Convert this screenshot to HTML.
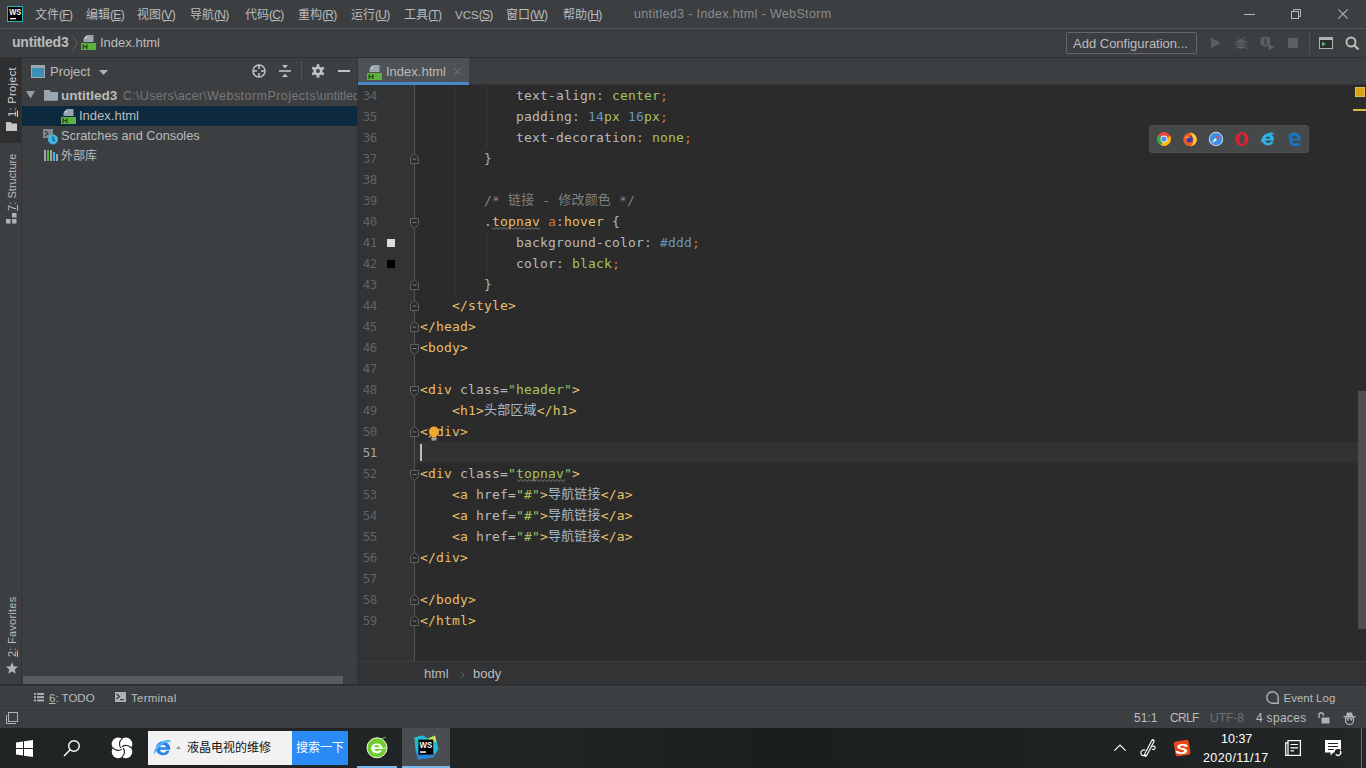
<!DOCTYPE html>
<html lang="zh">
<head>
<meta charset="utf-8">
<title>untitled3 - Index.html - WebStorm</title>
<style>
*{box-sizing:border-box;margin:0;padding:0}
html,body{width:1366px;height:768px;overflow:hidden;background:#3c3f41}
body{position:relative;font-family:"Liberation Sans","Noto Sans CJK SC",sans-serif;font-size:12px;color:#bbbbbb}
.abs{position:absolute}
.t{position:absolute;white-space:nowrap;line-height:16px}
svg{position:absolute;display:block;overflow:visible}
#titlebar{left:0;top:0;width:1366px;height:28px;background:#3c3f41}
#navbar{left:0;top:28px;width:1366px;height:30px;background:#3c3f41;border-top:1px solid #515456;border-bottom:1px solid #2f3133}
.menu{font-size:12px;color:#bbbbbb;top:7px;line-height:16px}
.menu i{font-style:normal;font-size:12px;letter-spacing:-0.7px}
.menu u{text-decoration:underline;text-underline-offset:1px}
#lstripe{left:0;top:58px;width:22px;height:626px;background:#3c3f41;border-right:1px solid #323537}
.vt{position:absolute;white-space:nowrap;transform-origin:0 0;transform:rotate(-90deg);font-size:11px;line-height:14px;color:#bbbbbb}
.vt u{text-underline-offset:1px}
#proj{left:22px;top:58px;width:336px;height:626px;background:#3c3f41;border-right:1px solid #323435;border-left:1px solid #3c3f41}
.row{position:absolute;left:-1px;width:335px;height:20px}
#tabs{left:358px;top:58px;width:1008px;height:27px;background:#3c3f41;border-bottom:1px solid #323232}
#editor{left:358px;top:85px;width:1008px;height:576px;background:#2b2b2b;overflow:hidden}
#gutter{left:0;top:0;width:56px;height:576px;background:#313335}
#gline{left:56px;top:0;width:1px;height:576px;background:#555555}
.ln{position:absolute;left:0;width:19px;text-align:right;font-family:"DejaVu Sans Mono","Liberation Mono",monospace;font-size:12.5px;letter-spacing:-0.4px;line-height:21px;height:21px;color:#606366}
.cl{position:absolute;left:62px;white-space:pre;font-family:"DejaVu Sans Mono","Noto Sans CJK SC",monospace;font-size:13px;letter-spacing:0.17px;line-height:21px;height:21px;color:#a9b7c6}
.cj{font-size:13px;position:relative;top:-1px}
.tg{color:#e8bf6a}.at{color:#bababa}.st{color:#a5c261}.kw{color:#cc7832}.nu{color:#6897bb}.cm{color:#808080}.pr{color:#bababa}
.wv{text-decoration:none}
#crumbs{left:358px;top:661px;width:1008px;height:23px;background:#313335;border-top:1px solid #3a3c3e}
#bstripe{left:0;top:684px;width:1366px;height:23px;background:#3c3f41;border-top:2px solid #2e3032;box-shadow:inset 0 1px 0 #424547}
#status{left:0;top:705px;width:1366px;height:23px;background:#3c3f41;border-top:2px solid #393c3e;box-shadow:inset 0 1px 0 #414446}
#taskbar{left:0;top:728px;width:1366px;height:40px;background:#202425 linear-gradient(90deg,#202425 0%,#212526 38%,#1b1e1f 57%,#1d2021 70%,#222625 100%)}
</style>
</head>
<body>
<!-- TITLE BAR -->
<div id="titlebar" class="abs">
  <svg style="left:7px;top:6px" width="16" height="16" viewBox="0 0 16 16"><rect x="0" y="0" width="16" height="16" fill="#1fb7b7"/><rect x="1" y="1" width="14" height="14" fill="#000"/><rect x="3" y="12" width="6" height="1.3" fill="#fff"/>
  <text x="2.2" y="9" font-family="Liberation Sans, sans-serif" font-weight="bold" font-size="9" fill="#fff" textLength="12" lengthAdjust="spacingAndGlyphs">WS</text></svg>
  <div class="t menu" style="left:35px">文件<i>(<u>F</u>)</i></div>
  <div class="t menu" style="left:86px">编辑<i>(<u>E</u>)</i></div>
  <div class="t menu" style="left:137px">视图<i>(<u>V</u>)</i></div>
  <div class="t menu" style="left:190px">导航<i>(<u>N</u>)</i></div>
  <div class="t menu" style="left:245px">代码<i>(<u>C</u>)</i></div>
  <div class="t menu" style="left:298px">重构<i>(<u>R</u>)</i></div>
  <div class="t menu" style="left:351px">运行<i>(<u>U</u>)</i></div>
  <div class="t menu" style="left:404px">工具<i>(<u>T</u>)</i></div>
  <div class="t menu" style="left:455px"><span style="font-size:11.5px">VCS</span><i>(<u>S</u>)</i></div>
  <div class="t menu" style="left:506px">窗口<i>(<u>W</u>)</i></div>
  <div class="t menu" style="left:563px">帮助<i>(<u>H</u>)</i></div>
  <div class="t" style="left:634px;top:6px;font-size:12.5px;letter-spacing:0.35px;color:#8b8d8f">untitled3 - Index.html - WebStorm</div>
  <div class="abs" style="left:1244px;top:14px;width:11px;height:1px;background:#b4b6b8"></div>
  <svg style="left:1291px;top:9px" width="10" height="10" viewBox="0 0 10 10" fill="none" stroke="#b4b6b8" stroke-width="1"><rect x="0.5" y="2.5" width="7" height="7"/><path d="M2.5 2.5V0.5H9.5V7.5H7.5"/></svg>
  <svg style="left:1338px;top:9px" width="10" height="10" viewBox="0 0 10 10" stroke="#b4b6b8" stroke-width="1.1"><path d="M0.3 0.3L9.7 9.7M9.7 0.3L0.3 9.7"/></svg>
</div>
<!-- NAV BAR -->
<div id="navbar" class="abs">
  <div class="t" style="left:12px;top:5px;font-size:14px;letter-spacing:-0.2px;font-weight:bold;color:#bbbbbb">untitled3</div>
  <svg style="left:72px;top:6px" width="6" height="16" viewBox="0 0 6 16" fill="none" stroke="#5a5d5f" stroke-width="1"><path d="M0.5 0.5L5 8L0.5 15.5"/></svg>
  <svg class="hicon" style="left:81px;top:6px" width="16" height="16" viewBox="0 0 16 16"><path d="M6.5 0H12.5V7H2.5V4Z" fill="#9aa7b0"/><path d="M6 0V3.5H2.5Z" fill="#c3cbd1"/><rect x="0" y="8" width="15" height="7" fill="#5fb041"/><path d="M2.2 9.3V14M2.2 11.6H5.8M5.8 9.3V14" stroke="#1e4d12" stroke-width="1.4" fill="none"/></svg>
  <div class="t" style="left:100px;top:6px;font-size:13px;color:#bbbbbb">Index.html</div>
  <div class="abs" style="left:1066px;top:3px;width:131px;height:22px;border:1px solid #646668;border-radius:2px"></div>
  <div class="t" style="left:1073px;top:7px;font-size:13px;color:#bbbbbb">Add Configuration...</div>
  <svg style="left:1210px;top:8px" width="11" height="12" viewBox="0 0 11 12"><path d="M1 0.5L10.5 6L1 11.5Z" fill="#5c5f61"/></svg>
  <svg style="left:1234px;top:7px" width="14" height="14" viewBox="0 0 14 14"><ellipse cx="7" cy="8" rx="4" ry="5" fill="#5c5f61"/><path d="M4.5 3L3 1M9.5 3L11 1M0.5 6H3.5M10.5 6H13.5M0.5 9H3.5M10.5 9H13.5M1 12.5L3.5 11M13 12.5L10.5 11" stroke="#5c5f61" stroke-width="1.2" fill="none"/><path d="M3 7H11M3 9.5H11" stroke="#3c3f41" stroke-width="0.8"/></svg>
  <svg style="left:1260px;top:7px" width="15" height="15" viewBox="0 0 15 15"><path d="M0.5 1.5L6 0.5L10 1.5V8L6 11L0.5 9Z" fill="#5c5f61"/><rect x="4.5" y="2.5" width="2" height="6.5" fill="#3c3f41"/><path d="M8.5 7.5L14.5 11L8.5 14.5Z" fill="#5c5f61"/></svg>
  <div class="abs" style="left:1288px;top:9px;width:10px;height:10px;background:#5c5f61"></div>
  <div class="abs" style="left:1309px;top:3px;width:1px;height:22px;background:#515355"></div>
  <svg style="left:1319px;top:8px" width="14" height="12" viewBox="0 0 14 12"><rect x="0" y="0" width="14" height="12" fill="#afb1b3"/><rect x="1" y="3" width="12" height="8" fill="#2b2f2b"/><path d="M3 4.5L7 7L3 9.5Z" fill="#59a869"/></svg>
  <svg style="left:1345px;top:7px" width="15" height="15" viewBox="0 0 15 15" fill="none" stroke="#bbbbbb"><circle cx="6" cy="6" r="4.5" stroke-width="2"/><path d="M9.5 9.5L13.5 13.5" stroke-width="2.4"/></svg>
</div>
<!-- LEFT STRIPE -->
<div id="lstripe" class="abs">
  <div class="abs" style="left:0;top:0;width:21px;height:85px;background:#2d2f30"></div>
  <div class="vt" style="left:5px;top:59px;letter-spacing:0.35px;color:#d4d4d4"><u>1</u>: Project</div>
  <svg style="left:6px;top:64px" width="11" height="9" viewBox="0 0 11 9"><path d="M0 0H4.5L6 1.5H11V9H0Z" fill="#c4c6c8"/></svg>
  <div class="vt" style="left:5px;top:153px;letter-spacing:0.05px"><u>7</u>: Structure</div>
  <svg style="left:6px;top:155px" width="11" height="11" viewBox="0 0 11 11" fill="#afb1b3"><rect x="6" y="0" width="4.5" height="4.5"/><rect x="0" y="6" width="4.5" height="4.5"/><rect x="6" y="6" width="4.5" height="4.5"/></svg>
  <div class="vt" style="left:5px;top:599px;letter-spacing:0.25px"><u>2</u>: Favorites</div>
  <svg style="left:5.5px;top:603.5px" width="12" height="12" viewBox="0 0 13 13"><path d="M6.5 0.3L8.4 4.6L13 5L9.5 8L10.6 12.6L6.5 10.2L2.4 12.6L3.5 8L0 5L4.6 4.6Z" fill="#afb1b3"/></svg>
</div>
<!-- PROJECT PANEL -->
<div id="proj" class="abs">
  <svg style="left:8px;top:7px" width="14" height="13" viewBox="0 0 14 13"><rect x="0" y="0" width="14" height="13" fill="#9aa7b0"/><rect x="1" y="3" width="12" height="9" fill="#3d8fb8"/></svg>
  <div class="t" style="left:27px;top:6px;font-size:13px">Project</div>
  <svg style="left:76px;top:12px" width="9" height="5" viewBox="0 0 9 5"><path d="M0 0H9L4.5 5Z" fill="#afb1b3"/></svg>
  <svg style="left:229px;top:6px" width="14" height="14" viewBox="0 0 14 14" fill="none" stroke="#bfc1c3" stroke-width="1.5"><circle cx="7" cy="7" r="6"/><path d="M7 1V5M7 9V13M1 7H5M9 7H13" stroke-width="1.6"/></svg>
  <svg style="left:256px;top:7px" width="12" height="12" viewBox="0 0 12 12" fill="#bfc1c3"><rect x="0" y="5.2" width="12" height="1.6"/><path d="M3 0H9L6 3.3Z"/><path d="M3 12H9L6 8.7Z"/></svg>
  <div class="abs" style="left:278px;top:3px;width:1px;height:20px;background:#515355"></div>
  <svg style="left:288px;top:6px" width="14" height="14" viewBox="0 0 14 14"><g fill="#bfc1c3"><circle cx="7" cy="7" r="4.6"/><rect x="5.6" y="0.3" width="2.8" height="13.4" rx="0.5"/><rect x="5.6" y="0.3" width="2.8" height="13.4" rx="0.5" transform="rotate(60 7 7)"/><rect x="5.6" y="0.3" width="2.8" height="13.4" rx="0.5" transform="rotate(120 7 7)"/></g><circle cx="7" cy="7" r="1.9" fill="#3c3f41"/></svg>
  <div class="abs" style="left:315px;top:12px;width:12px;height:2px;background:#bfc1c3"></div>
  <!-- tree -->
  <div class="row" style="top:48px;background:#0d293e"></div>
  <svg style="left:3px;top:33px" width="9" height="8" viewBox="0 0 9 8"><path d="M0 0H9L4.5 7.5Z" fill="#9a9da0"/></svg>
  <svg style="left:21px;top:32px" width="14" height="11" viewBox="0 0 14 11"><path d="M0 0H5.5L7 2H14V10.7H0Z" fill="#9aa7b0"/></svg>
  <div class="t" style="left:38px;top:30px;font-size:13.5px;font-weight:bold">untitled3</div>
  <div class="t" style="left:100px;top:30px;font-size:12.5px;color:#787878;width:234px;overflow:hidden"><span style="letter-spacing:0.3px">C:\Users\acer\</span><span style="letter-spacing:0.45px">WebstormProjects</span>\untitled3</div>
  <svg style="left:38px;top:51px" width="16" height="16" viewBox="0 0 16 16"><path d="M6.5 0H12.5V7H2.5V4Z" fill="#9aa7b0"/><path d="M6 0V3.5H2.5Z" fill="#c3cbd1"/><rect x="0" y="8" width="15" height="7" fill="#5fb041"/><path d="M2.2 9.3V14M2.2 11.6H5.8M5.8 9.3V14" stroke="#1e4d12" stroke-width="1.4" fill="none"/></svg>
  <div class="t" style="left:56px;top:50px;font-size:13px">Index.html</div>
  <svg style="left:20px;top:71px" width="16" height="16" viewBox="0 0 16 16"><rect x="0" y="0" width="10" height="9" fill="#7f8b91"/><path d="M2 2L5 4.5L2 7" stroke="#3c3f41" stroke-width="1.2" fill="none"/><circle cx="10" cy="10.5" r="5" fill="#40b6e0"/><path d="M10 7.5V10.8L12 12" stroke="#1d4a5e" stroke-width="1.2" fill="none"/></svg>
  <div class="t" style="left:38px;top:70px;font-size:12.8px">Scratches and Consoles</div>
  <svg style="left:21px;top:92px" width="14" height="11" viewBox="0 0 14 11"><rect x="0" y="0" width="2" height="11" fill="#9aa7b0"/><rect x="3" y="0" width="2" height="11" fill="#62b543"/><rect x="6" y="0" width="2" height="11" fill="#9aa7b0"/><rect x="9" y="2" width="2" height="9" fill="#40b6e0"/><rect x="12" y="4" width="2" height="7" fill="#9aa7b0"/></svg>
  <div class="t" style="left:38px;top:90px;font-size:12px">外部库</div>
  <div class="abs" style="left:0;top:618px;width:320px;height:8px;background:#595b5d"></div>
</div>
<!-- TABS -->
<div id="tabs" class="abs">
  <div class="abs" style="left:0;top:0;width:111px;height:27px;background:#4e5254;border-bottom:3px solid #4a88c7"></div>
  <svg style="left:8.5px;top:7px" width="16" height="16" viewBox="0 0 16 16"><path d="M6.5 0H12.5V7H2.5V4Z" fill="#9aa7b0"/><path d="M6 0V3.5H2.5Z" fill="#c3cbd1"/><rect x="0" y="8" width="15" height="7" fill="#5fb041"/><path d="M2.2 9.3V14M2.2 11.6H5.8M5.8 9.3V14" stroke="#1e4d12" stroke-width="1.4" fill="none"/></svg>
  <div class="t" style="left:28px;top:6px;font-size:13px">Index.html</div>
  <svg style="left:95.5px;top:10px" width="7" height="7" viewBox="0 0 7 7" stroke="#787a7c" stroke-width="1"><path d="M0.5 0.5L6.5 6.5M6.5 0.5L0.5 6.5"/></svg>
</div>
<!-- EDITOR -->
<div id="editor" class="abs">
  <div class="abs" style="left:57px;top:357px;width:951px;height:21px;background:#323232"></div>
  <div id="gutter" class="abs"></div>
  <div id="gline" class="abs"></div>
  <div class="abs" style="left:96px;top:0;width:1px;height:210px;background:#393939"></div>
  <div class="abs" style="left:128px;top:0;width:1px;height:63px;background:#393939"></div>
  <div class="abs" style="left:128px;top:147px;width:1px;height:42px;background:#393939"></div>
  <div class="abs" style="left:29px;top:154px;width:8px;height:8px;background:#dddddd"></div>
  <div class="abs" style="left:29px;top:175px;width:8px;height:8px;background:#000000"></div>
  <div id="codebox">
<div class="ln" style="top:0px">34</div>
<div class="ln" style="top:21px">35</div>
<div class="ln" style="top:42px">36</div>
<div class="ln" style="top:63px">37</div>
<div class="ln" style="top:84px">38</div>
<div class="ln" style="top:105px">39</div>
<div class="ln" style="top:126px">40</div>
<div class="ln" style="top:147px">41</div>
<div class="ln" style="top:168px">42</div>
<div class="ln" style="top:189px">43</div>
<div class="ln" style="top:210px">44</div>
<div class="ln" style="top:231px">45</div>
<div class="ln" style="top:252px">46</div>
<div class="ln" style="top:273px">47</div>
<div class="ln" style="top:294px">48</div>
<div class="ln" style="top:315px">49</div>
<div class="ln" style="top:336px">50</div>
<div class="ln" style="top:357px;color:#a4a3a3">51</div>
<div class="ln" style="top:378px">52</div>
<div class="ln" style="top:399px">53</div>
<div class="ln" style="top:420px">54</div>
<div class="ln" style="top:441px">55</div>
<div class="ln" style="top:462px">56</div>
<div class="ln" style="top:483px">57</div>
<div class="ln" style="top:504px">58</div>
<div class="ln" style="top:525px">59</div>
<div class="cl" style="top:0px">            <span class="pr">text-align</span>: <span class="st">center</span><span class="kw">;</span></div>
<div class="cl" style="top:21px">            <span class="pr">padding</span>: <span class="nu">14</span><span class="st">px</span> <span class="nu">16</span><span class="st">px</span><span class="kw">;</span></div>
<div class="cl" style="top:42px">            <span class="pr">text-decoration</span>: <span class="st">none</span><span class="kw">;</span></div>
<div class="cl" style="top:63px">        }</div>
<div class="cl" style="top:105px">        <span class="cm">/* <span class="cj">链接</span> - <span class="cj">修改颜色</span> */</span></div>
<div class="cl" style="top:126px">        .<span class="tg wv">topnav</span> <span class="kw">a</span>:<span class="tg">hover</span> {</div>
<div class="cl" style="top:147px">            <span class="pr">background-color</span>: <span class="nu">#ddd</span><span class="kw">;</span></div>
<div class="cl" style="top:168px">            <span class="pr">color</span>: <span class="st">black</span><span class="kw">;</span></div>
<div class="cl" style="top:189px">        }</div>
<div class="cl" style="top:210px">    <span class="tg">&lt;/style&gt;</span></div>
<div class="cl" style="top:231px"><span class="tg">&lt;/head&gt;</span></div>
<div class="cl" style="top:252px"><span class="tg">&lt;body&gt;</span></div>
<div class="cl" style="top:294px"><span class="tg">&lt;div</span> <span class="at">class=</span><span class="st">"header"</span><span class="tg">&gt;</span></div>
<div class="cl" style="top:315px">    <span class="tg">&lt;h1&gt;</span><span class="cj">头部区域</span><span class="tg">&lt;/h1&gt;</span></div>
<div class="cl" style="top:336px"><span class="tg">&lt;/div&gt;</span></div>
<div class="cl" style="top:378px"><span class="tg">&lt;div</span> <span class="at">class=</span><span class="st">"<span class="wv">topnav</span>"</span><span class="tg">&gt;</span></div>
<div class="cl" style="top:399px">    <span class="tg">&lt;a</span> <span class="at">href=</span><span class="st">"#"</span><span class="tg">&gt;</span><span class="cj">导航链接</span><span class="tg">&lt;/a&gt;</span></div>
<div class="cl" style="top:420px">    <span class="tg">&lt;a</span> <span class="at">href=</span><span class="st">"#"</span><span class="tg">&gt;</span><span class="cj">导航链接</span><span class="tg">&lt;/a&gt;</span></div>
<div class="cl" style="top:441px">    <span class="tg">&lt;a</span> <span class="at">href=</span><span class="st">"#"</span><span class="tg">&gt;</span><span class="cj">导航链接</span><span class="tg">&lt;/a&gt;</span></div>
<div class="cl" style="top:462px"><span class="tg">&lt;/div&gt;</span></div>
<div class="cl" style="top:504px"><span class="tg">&lt;/body&gt;</span></div>
<div class="cl" style="top:525px"><span class="tg">&lt;/html&gt;</span></div>
<svg style="left:52px;top:68px" width="9" height="11" viewBox="0 0 9 11"><path d="M0.5 10.5V4L4.5 0.5L8.5 4V10.5Z" fill="#2b2b2b" stroke="#5e6062" stroke-width="1"/><path d="M2.5 6H6.5" stroke="#7a7a7a" stroke-width="1"/></svg>
<svg style="left:52px;top:132.5px" width="9" height="11" viewBox="0 0 9 11"><path d="M0.5 0.5H8.5V6.5L4.5 10.5L0.5 6.5Z" fill="#2b2b2b" stroke="#5e6062" stroke-width="1"/><path d="M2.5 4.5H6.5" stroke="#7a7a7a" stroke-width="1"/></svg>
<svg style="left:52px;top:194px" width="9" height="11" viewBox="0 0 9 11"><path d="M0.5 10.5V4L4.5 0.5L8.5 4V10.5Z" fill="#2b2b2b" stroke="#5e6062" stroke-width="1"/><path d="M2.5 6H6.5" stroke="#7a7a7a" stroke-width="1"/></svg>
<svg style="left:52px;top:215px" width="9" height="11" viewBox="0 0 9 11"><path d="M0.5 10.5V4L4.5 0.5L8.5 4V10.5Z" fill="#2b2b2b" stroke="#5e6062" stroke-width="1"/><path d="M2.5 6H6.5" stroke="#7a7a7a" stroke-width="1"/></svg>
<svg style="left:52px;top:236px" width="9" height="11" viewBox="0 0 9 11"><path d="M0.5 10.5V4L4.5 0.5L8.5 4V10.5Z" fill="#2b2b2b" stroke="#5e6062" stroke-width="1"/><path d="M2.5 6H6.5" stroke="#7a7a7a" stroke-width="1"/></svg>
<svg style="left:52px;top:258.5px" width="9" height="11" viewBox="0 0 9 11"><path d="M0.5 0.5H8.5V6.5L4.5 10.5L0.5 6.5Z" fill="#2b2b2b" stroke="#5e6062" stroke-width="1"/><path d="M2.5 4.5H6.5" stroke="#7a7a7a" stroke-width="1"/></svg>
<svg style="left:52px;top:300.5px" width="9" height="11" viewBox="0 0 9 11"><path d="M0.5 0.5H8.5V6.5L4.5 10.5L0.5 6.5Z" fill="#2b2b2b" stroke="#5e6062" stroke-width="1"/><path d="M2.5 4.5H6.5" stroke="#7a7a7a" stroke-width="1"/></svg>
<svg style="left:52px;top:341px" width="9" height="11" viewBox="0 0 9 11"><path d="M0.5 10.5V4L4.5 0.5L8.5 4V10.5Z" fill="#2b2b2b" stroke="#5e6062" stroke-width="1"/><path d="M2.5 6H6.5" stroke="#7a7a7a" stroke-width="1"/></svg>
<svg style="left:52px;top:384.5px" width="9" height="11" viewBox="0 0 9 11"><path d="M0.5 0.5H8.5V6.5L4.5 10.5L0.5 6.5Z" fill="#2b2b2b" stroke="#5e6062" stroke-width="1"/><path d="M2.5 4.5H6.5" stroke="#7a7a7a" stroke-width="1"/></svg>
<svg style="left:52px;top:467px" width="9" height="11" viewBox="0 0 9 11"><path d="M0.5 10.5V4L4.5 0.5L8.5 4V10.5Z" fill="#2b2b2b" stroke="#5e6062" stroke-width="1"/><path d="M2.5 6H6.5" stroke="#7a7a7a" stroke-width="1"/></svg>
<svg style="left:52px;top:509px" width="9" height="11" viewBox="0 0 9 11"><path d="M0.5 10.5V4L4.5 0.5L8.5 4V10.5Z" fill="#2b2b2b" stroke="#5e6062" stroke-width="1"/><path d="M2.5 6H6.5" stroke="#7a7a7a" stroke-width="1"/></svg>
<svg style="left:52px;top:530px" width="9" height="11" viewBox="0 0 9 11"><path d="M0.5 10.5V4L4.5 0.5L8.5 4V10.5Z" fill="#2b2b2b" stroke="#5e6062" stroke-width="1"/><path d="M2.5 6H6.5" stroke="#7a7a7a" stroke-width="1"/></svg>
  </div>
  <svg style="left:134px;top:142px" width="48" height="3" viewBox="0 0 48 3"><polyline points="0,0.5 2,2.5 4,0.5 6,2.5 8,0.5 10,2.5 12,0.5 14,2.5 16,0.5 18,2.5 20,0.5 22,2.5 24,0.5 26,2.5 28,0.5 30,2.5 32,0.5 34,2.5 36,0.5 38,2.5 40,0.5 42,2.5 44,0.5 46,2.5 48,0.5" fill="none" stroke="#83917f" stroke-width="0.85"/></svg>
  <svg style="left:159px;top:394px" width="48" height="3" viewBox="0 0 48 3"><polyline points="0,0.5 2,2.5 4,0.5 6,2.5 8,0.5 10,2.5 12,0.5 14,2.5 16,0.5 18,2.5 20,0.5 22,2.5 24,0.5 26,2.5 28,0.5 30,2.5 32,0.5 34,2.5 36,0.5 38,2.5 40,0.5 42,2.5 44,0.5 46,2.5 48,0.5" fill="none" stroke="#83917f" stroke-width="0.85"/></svg>
  <div class="abs" style="left:62px;top:359px;width:2px;height:17px;background:#bbbbbb"></div>
  <svg style="left:70px;top:340px" width="12" height="16" viewBox="0 0 12 16"><circle cx="6" cy="6.5" r="5" fill="#f2a82d"/><rect x="3.5" y="10" width="5" height="2.5" fill="#f2a82d"/><rect x="3.5" y="12.8" width="5" height="1" fill="#d8d8d8"/><rect x="3.5" y="14.4" width="5" height="1" fill="#d8d8d8"/></svg>
  <!-- browsers popup -->
  <div class="abs" style="left:791px;top:40px;width:160px;height:28px;background:#45494a;border:1px solid #4c5052;border-radius:3px"></div>
  <svg style="left:798px;top:46px" width="16" height="16" viewBox="0 0 16 16"><circle cx="8" cy="8" r="7" fill="#e8453c"/><path d="M8 8L1.9 4.5A7 7 0 0 0 5 14.3Z" fill="#34a853"/><path d="M8 8L5 14.3A7 7 0 0 0 14.9 8.5L14.5 5Z" fill="#fbbc05"/><path d="M8 8L14.5 4.8L11 5Z" fill="#e8453c"/><circle cx="8" cy="8" r="3.4" fill="#f1f1f1"/><circle cx="8" cy="8" r="2.6" fill="#4b8bf4"/></svg>
  <svg style="left:824px;top:46px" width="16" height="16" viewBox="0 0 16 16"><circle cx="8" cy="8.5" r="6.8" fill="#f0582a"/><path d="M8 1.5C12 2 14.8 5 14.8 8.5C14.8 12 12 15 8.5 15.3C11 13 12 10 11 7C10.5 5 9 3 8 1.5Z" fill="#ffcb2d"/><circle cx="7.6" cy="8.2" r="3.2" fill="#3b3aa8"/><path d="M3 6C5 4 8 5 9 7C7 6.5 5 7 4 9Z" fill="#f58a1f"/></svg>
  <svg style="left:850px;top:46px" width="16" height="16" viewBox="0 0 16 16"><circle cx="8" cy="8" r="7.2" fill="#d7dde4"/><circle cx="8" cy="8" r="6.2" fill="#3b8fe8"/><path d="M12 4L9 9L7 7Z" fill="#f04a3a"/><path d="M4 12L9 9L7 7Z" fill="#ffffff"/></svg>
  <svg style="left:876px;top:46px" width="16" height="16" viewBox="0 0 16 16"><ellipse cx="8" cy="8" rx="6.6" ry="7" fill="#e0202f"/><ellipse cx="8" cy="8" rx="2.7" ry="5" fill="#45494a"/></svg>
  <svg style="left:902px;top:46px" width="16" height="16" viewBox="0 0 16 16"><path d="M2 8.5A6 6 0 0 1 14 8.5V9.5H5.5A2.8 2.8 0 0 0 10.8 10.5H13.6A6 6 0 0 1 2 8.5ZM5.5 7.5H10.6A2.6 2.6 0 0 0 5.5 7.5Z" fill="#2bb5ea"/><path d="M1 12C0 9 4 4 9 2C12 1 14.5 1.5 14 4C13.5 2.5 11 3 8.5 4.5C5 6.5 2 10 1 12Z" fill="#2bb5ea"/></svg>
  <svg style="left:928px;top:46px" width="16" height="16" viewBox="0 0 16 16"><path d="M1.5 8C2 4 5 1.5 8.5 1.5C12 1.5 14.5 4 14.5 7.5V9.5H5.8C6 11.5 8 12.6 10 12.6C11.6 12.6 13 12.2 14 11.6V14C13 14.6 11.4 15 9.6 15C5.5 15 3 12.5 3 9C3 7 4 5.5 5.5 4.8C3.5 5 2 6.5 1.5 8ZM5.9 7.4H11.2C11.2 5.5 10 4.4 8.5 4.4C7 4.4 6 5.6 5.9 7.4Z" fill="#1477c8"/></svg>
  <!-- scrollbar / markers -->
  <div class="abs" style="left:997px;top:2px;width:10px;height:10px;background:#d6a316;border:1px solid #e3bd55"></div>
  <div class="abs" style="left:995px;top:24px;width:13px;height:2px;background:#d9b53a"></div>
  <div class="abs" style="left:1000px;top:306px;width:8px;height:238px;background:#4d4d4d"></div>
</div>
<div id="crumbs" class="abs">
  <div class="t" style="left:66px;top:4px;font-size:13px">html</div>
  <svg style="left:102px;top:9px" width="5" height="8" viewBox="0 0 5 8" fill="none" stroke="#606365" stroke-width="1"><path d="M0.5 0.5L4 4L0.5 7.5"/></svg>
  <div class="t" style="left:115px;top:4px;font-size:13px">body</div>
</div>
<!-- BOTTOM STRIPE -->
<div id="bstripe" class="abs">
  <svg style="left:34px;top:7px" width="10" height="9" viewBox="0 0 10 9" fill="#afb1b3"><rect x="0" y="0" width="2" height="1.9"/><rect x="3" y="0" width="7" height="1.9"/><rect x="0" y="3.2" width="2" height="1.9"/><rect x="3" y="3.2" width="7" height="1.9"/><rect x="0" y="6.5" width="2" height="1.9"/><rect x="3" y="6.5" width="7" height="1.9"/></svg>
  <div class="t" style="left:49px;top:4px;font-size:11.5px"><u>6</u>: TODO</div>
  <svg style="left:115px;top:6px" width="11" height="10" viewBox="0 0 11 10"><rect x="0" y="0" width="11" height="10" fill="#afb1b3"/><path d="M1.5 2L4.5 4.5L1.5 7" stroke="#3c3f41" stroke-width="1.3" fill="none"/><rect x="5" y="7" width="4" height="1.2" fill="#3c3f41"/></svg>
  <div class="t" style="left:131px;top:4px;font-size:11.5px;letter-spacing:0.25px">Terminal</div>
  <svg style="left:1266px;top:5px" width="13" height="13" viewBox="0 0 13 13" fill="none" stroke="#afb1b3" stroke-width="1.4"><path d="M6.5 0.8A5.7 5.7 0 1 0 6.5 12.2H12.2V6.5A5.7 5.7 0 0 0 6.5 0.8Z"/></svg>
  <div class="t" style="left:1283.5px;top:4px;font-size:11.5px">Event Log</div>
</div>
<div id="status" class="abs">
  <svg style="left:5px;top:5px" width="13" height="13" viewBox="0 0 13 13" fill="none" stroke="#afb1b3" stroke-width="1"><rect x="3.5" y="0.5" width="9" height="9"/><path d="M1.5 3V11.5H11"/></svg>
  <div class="t" style="left:1134px;top:3px;font-size:12px">51:1</div>
  <div class="t" style="left:1170px;top:3px;font-size:12px;letter-spacing:-0.7px">CRLF</div>
  <div class="t" style="left:1210px;top:3px;font-size:12px;color:#6e7072">UTF-8</div>
  <div class="t" style="left:1256px;top:3px;font-size:12px;letter-spacing:0.3px">4 spaces</div>
  <svg style="left:1318px;top:5px" width="12" height="12" viewBox="0 0 12 12"><path d="M1 6V3A2.2 2.2 0 0 1 5.4 3V4" fill="none" stroke="#afb1b3" stroke-width="1.4"/><rect x="3.5" y="5.5" width="8" height="6" fill="#afb1b3"/></svg>
  <svg style="left:1343px;top:5px" width="13" height="13" viewBox="0 0 13 13"><path d="M3 4L4 0.5H9L10 4Z" fill="#afb1b3"/><rect x="0.5" y="4" width="12" height="1.4" fill="#afb1b3"/><path d="M2.5 6.2H10.5V8.5A4 4 0 0 1 2.5 8.5Z" fill="none" stroke="#afb1b3" stroke-width="1.2"/><rect x="4" y="7" width="1.6" height="1.6" fill="#afb1b3"/><rect x="7.4" y="7" width="1.6" height="1.6" fill="#afb1b3"/></svg>
</div>
<!-- TASKBAR -->
<div id="taskbar" class="abs">
  <svg style="left:16px;top:12px" width="17" height="17" viewBox="0 0 17 17" fill="#ffffff"><path d="M0 2.4L7 1.4V8H0Z"/><path d="M8 1.25L17 0V8H8Z"/><path d="M0 9H7V15.6L0 14.6Z"/><path d="M8 9H17V17L8 15.75Z"/></svg>
  <svg style="left:63px;top:11px" width="18" height="18" viewBox="0 0 18 18" fill="none" stroke="#ffffff" stroke-width="1.4"><circle cx="11" cy="7" r="5.3"/><path d="M7.2 10.8L1 17"/></svg>
  <svg style="left:111px;top:9px" width="22" height="22" viewBox="0 0 22 22"><g fill="#ffffff"><circle cx="7.1" cy="7" r="6.4"/><circle cx="14.9" cy="7" r="6.4"/><circle cx="14.9" cy="14.8" r="6.4"/><circle cx="7.1" cy="14.8" r="6.4"/></g><g fill="none" stroke="#202425" stroke-width="1.1"><path d="M11 1.93A6.4 6.4 0 0 0 9.83 10.9"/><path d="M11 1.93A6.4 6.4 0 0 0 9.83 10.9" transform="rotate(90 11 10.9)"/><path d="M11 1.93A6.4 6.4 0 0 0 9.83 10.9" transform="rotate(180 11 10.9)"/><path d="M11 1.93A6.4 6.4 0 0 0 9.83 10.9" transform="rotate(270 11 10.9)"/></g></svg>
  <div class="abs" style="left:148px;top:3px;width:144px;height:34px;background:#f2f2f2"></div>
  <svg style="left:153px;top:10px" width="20" height="20" viewBox="0 0 18 18"><path d="M2.5 9.5A6.5 6.5 0 0 1 15.5 9.5V10.5H6.3A3 3 0 0 0 12 11.5H15A6.5 6.5 0 0 1 2.5 9.5ZM6.3 8.3H11.8A2.8 2.8 0 0 0 6.3 8.3Z" fill="#2a82ea"/><path d="M1.2 15.5C-0.5 11 4 5 10 2.5C13.5 1 16.5 1.5 16 4.5C15.5 3 12.5 3.3 9.5 5C5.5 7.3 2 12 1.2 15.5Z" fill="#5bb7f5"/></svg>
  <svg style="left:176px;top:18px" width="5" height="3" viewBox="0 0 5 3"><path d="M0 3H5L2.5 0Z" fill="#9a9a9a"/></svg>
  <div class="t" style="left:187px;top:12px;font-size:12px;color:#111">液晶电视的维修</div>
  <div class="abs" style="left:292px;top:3px;width:56px;height:34px;background:#2a8af6"></div>
  <div class="t" style="left:296px;top:12px;font-size:12px;color:#fff">搜索一下</div>
  <svg style="left:366px;top:9px" width="22" height="22" viewBox="0 0 22 22"><circle cx="11" cy="10.8" r="10" fill="#6fce2e" stroke="#f2fbe9" stroke-width="1"/><path d="M5.2 11.3A5.6 4.9 0 0 1 16.4 11.3V12H8.3A2.9 2.6 0 0 0 13.4 13.2H16A5.6 4.9 0 0 1 5.2 11.3ZM8.3 10.2H13.5A2.6 2.3 0 0 0 8.3 10.2Z" fill="#ffffff"/><path d="M13 11.1H20.5" stroke="#eafcd9" stroke-width="0.9"/><path d="M15 2.6C17 1 18.5 0.6 19.5 0.4" stroke="#8fdc4f" stroke-width="1" fill="none"/></svg>
  <div class="abs" style="left:357px;top:38px;width:40px;height:2px;background:#76b9ed"></div>
  <div class="abs" style="left:402px;top:0;width:48px;height:38px;background:#4a4e50"></div>
  <div class="abs" style="left:402px;top:38px;width:48px;height:2px;background:#76b9ed"></div>
  <svg style="left:414px;top:7px" width="25" height="25" viewBox="0 0 25 25"><path d="M0.5 2.5L9 0.5L14 3.5L21 0.5L24.5 14L19 22.5L4 24.5L1.5 15Z" fill="#1fb9d9"/><path d="M14 3.5L21 0.5L22.5 7L17 6Z" fill="#c9e24a"/><path d="M1.5 15L4 24.5L19 22.5L21 18L4 19Z" fill="#2a83d6"/><path d="M0.5 2.5L9 0.5L5 8L2 12Z" fill="#19c3d4"/><rect x="4.4" y="4.6" width="14.8" height="15" fill="#000"/><rect x="6" y="16.3" width="6" height="1.5" fill="#fff"/><text x="5.6" y="13.2" font-family="Liberation Sans, sans-serif" font-weight="bold" font-size="9" fill="#fff" textLength="12.6" lengthAdjust="spacingAndGlyphs">WS</text></svg>
  <svg style="left:1114px;top:16px" width="12" height="7" viewBox="0 0 12 7" fill="none" stroke="#ffffff" stroke-width="1.2"><path d="M0.4 6.6L6 1L11.6 6.6"/></svg>
  <svg style="left:1140px;top:11px" width="18" height="18" viewBox="0 0 18 18" fill="none" stroke="#ffffff" stroke-width="1.2" stroke-linecap="round"><path d="M5.6 16L12.9 2" stroke-width="3.6"/><path d="M5.9 15.4L12.7 2.4" stroke="#202425" stroke-width="1.2"/><path d="M4.8 11C1.5 10.5 -0.3 14 1.5 15.8C2.8 17 4.3 16.8 5 16"/><path d="M11.6 7.6C13 6.5 15.4 7 15.1 9C14.8 10.8 13 10.6 12.2 10.3"/></svg>
  <svg style="left:1173px;top:11px" width="18" height="18" viewBox="0 0 18 18"><rect x="1.6" y="1.6" width="15" height="15" rx="2.5" fill="#ea4a1a" transform="rotate(-9 9 9)"/><text x="2.6" y="14.6" font-family="Liberation Sans, sans-serif" font-weight="bold" font-style="italic" font-size="15.5" fill="#fff" textLength="12.5" lengthAdjust="spacingAndGlyphs">S</text></svg>
  <div class="t" style="left:1221px;top:3px;font-size:12.5px;color:#fff">10:37</div>
  <div class="t" style="left:1203px;top:22px;font-size:12.5px;letter-spacing:0.4px;color:#fff">2020/11/17</div>
  <svg style="left:1285px;top:12px" width="17" height="16" viewBox="0 0 17 16" fill="none" stroke="#ffffff" stroke-width="1.2"><rect x="3" y="0.6" width="12.4" height="14.8"/><path d="M3 2.8H0.7V15.4H3M5.5 4.5H13M5.5 7.8H13M5.5 10.8H9"/></svg>
  <svg style="left:1325px;top:12px" width="17" height="17" viewBox="0 0 17 17"><path d="M0 0H16V12.5H8.5L5.5 15.5V12.5H0Z" fill="#ffffff"/><path d="M3 3.5H13M3 6.5H13M3 9.5H9" stroke="#202425" stroke-width="1.1"/><circle cx="13" cy="12.5" r="3.4" fill="#202425"/><path d="M10.8 14.2A2.6 2.6 0 0 0 15.2 10.8" stroke="#fff" stroke-width="1.3" fill="none"/></svg>
  <div class="abs" style="left:1361px;top:0;width:1px;height:40px;background:#6b6b6b"></div>
</div>
</body>
</html>
